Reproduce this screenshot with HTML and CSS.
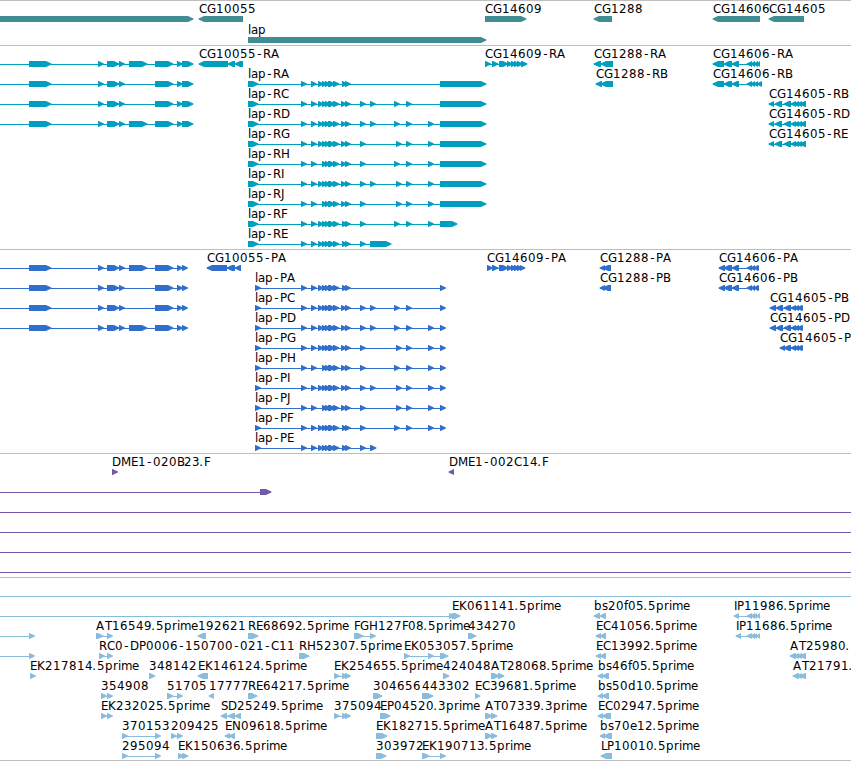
FILE: index.html
```html
<!DOCTYPE html>
<html lang="en">
    <head>
        <meta charset="UTF-8">
        <title>Genome browser</title>
        <meta name="viewport" content="width=device-width, initial-scale=1.0">
        <link rel="stylesheet" href="styles.css">
    </head>
    <body>
        <main class="browser">
            <svg class="track genes" id="genes" height="44"></svg>
            <svg class="track transcripts" id="transcripts" height="203"></svg>
            <svg class="track proteins" id="proteins" height="203"></svg>
            <svg class="track ends" id="ends" height="123"></svg>
            <svg class="track ests" id="ests" height="182"></svg>
        </main>
        <script src="tracks.js"></script>
    </body>
</html>
```

FILE: styles.css
```css
body {
    margin: 0;
    background-color: white;
    overflow: hidden;
}

.browser {
    display: flex;
    flex-direction: column;
    border-bottom: 1px solid #bebebe;
}

.track {
    display: block;
    width: 100%;
    border-top: 1px solid #bebebe;
    overflow: hidden;
    font-family: "DejaVu Sans", sans-serif;
    font-size: 11.8px;
}

.track text { fill: black; }

.genes { color: #408e93; }
.transcripts { color: #009fc0; }
.proteins { color: #316fcc; }
.ends { color: #7358a8; }
.ests { color: #8abddd; }

.block { fill: currentColor; }

.intron {
    fill: currentColor;
    shape-rendering: crispEdges;
}
```

FILE: tracks.js
```js
const SVG = 'http://www.w3.org/2000/svg'
const HEAD = 5

// Whole-pixel character advances for the labels, 8 for the others
const advances = {
    G: 9, A: 9, D: 9, H: 9, N: 9, M: 10, T: 7, B: 7, E: 7, P: 7, S: 7,
    F: 6, L: 6, I: 3, J: 4, '-': 7, '.': 4,
    l: 3, a: 7, r: 5, i: 3, m: 11, e: 7, s: 6, f: 4
}

const shifts = { '-': 1.2, '.': -0.8 }

// Exons shared by the lap isoforms
const lap = '301 311 318 322 325 328-335 333-339 '
const lapShort = '301 311 322 325 328-335 333-339 '
const left = '29-51 98 107-119 119 '
const cg14609 = '492-498 499-508 507 511 514 517 '
const cg14605 = '784-791 791-796 794-799 797-802 '
const cg14606 = '724-732 732-739 747-752 751-755 754-758 '

// Each feature: row, label, strand, blocks ("start-end", or "start" alone)
// A block list starting with "<" goes on past the left edge.
const tracks = {
    genes: [
        [0, '', '+', '< 0-193'],
        [0, 'CG10055', '-', '199-243'],
        [0, 'CG14609', '+', '485-526'],
        [0, 'CG1288', '-', '594-612'],
        [0, 'CG14606', '-', '713-760'],
        [0, 'CG14605', '-', '769-804'],
        [1, 'lap', '+', '248-486']
    ],
    transcripts: [
        [0, '', '+', '< ' + left + '129-147 155-173 177 182-193'],
        [1, '', '+', '< ' + left + '155-173 177 182-193'],
        [2, '', '+', '< ' + left + '155-173 177 182-193'],
        [3, '', '+', '< ' + left + '129-147 155-173 177 182-193'],
        [0, 'CG10055-RA', '-', '199-228 228-235 235-243'],
        [1, 'lap-RA', '+', '248-258 ' + lap + '342 345 440-486'],
        [2, 'lap-RC', '+', '248-258 ' + lap + '341 345 360 370 394 406 440-486'],
        [3, 'lap-RD', '+', '248-258 ' + lap + '341 345 360 370 394 406 428 440-486'],
        [4, 'lap-RG', '+', '248-258 ' + lap + '341 345 360 396 406 428 440-486'],
        [5, 'lap-RH', '+', '248-258 ' + lapShort + '341 345 360 394 406 428 440-486'],
        [6, 'lap-RI', '+', '248-258 ' + lap + '341 345 360 370 396 406 428 440-486'],
        [7, 'lap-RJ', '+', '248-258 ' + lapShort + '341 345 360 396 406 428 440-486'],
        [8, 'lap-RF', '+', '248-258 ' + lap + '342 345 360 394 406 428 440-457'],
        [9, 'lap-RE', '+', '248-258 ' + lap + '342 345 360 370-391'],
        [0, 'CG14609-RA', '+', '485 ' + cg14609 + '521-527'],
        [0, 'CG1288-RA', '-', '594-601 601-613'],
        [1, 'CG1288-RB', '-', '596-602 601-613'],
        [0, 'CG14606-RA', '-', '713-724 ' + cg14606 + '757-760'],
        [1, 'CG14606-RB', '-', '713-724 ' + cg14606 + '757-762'],
        [2, 'CG14605-RB', '-', '769-774 775-782 ' + cg14605 + '800-806'],
        [3, 'CG14605-RD', '-', '769-774 775-782 ' + cg14605 + '800-806'],
        [4, 'CG14605-RE', '-', '769-774 775-782 ' + cg14605 + '800-806']
    ],
    proteins: [
        [0, '', '+', '< ' + left + '129-147 155-173 177 182'],
        [1, '', '+', '< ' + left + '155-173 177 182'],
        [2, '', '+', '< ' + left + '155-173 177 182'],
        [3, '', '+', '< ' + left + '129-147 155-173 177 182'],
        [0, 'CG10055-PA', '-', '207-227 227-235 235-241'],
        [1, 'lap-PA', '+', '255 ' + lap + '342 345 440'],
        [2, 'lap-PC', '+', '255 ' + lap + '341 345 360 370 394 406 440'],
        [3, 'lap-PD', '+', '255 ' + lap + '341 345 360 370 394 406 428 440'],
        [4, 'lap-PG', '+', '255 ' + lap + '341 345 360 396 406 428 440'],
        [5, 'lap-PH', '+', '255 ' + lapShort + '341 345 360 394 406 428 440'],
        [6, 'lap-PI', '+', '255 ' + lap + '341 345 360 370 396 406 428 440'],
        [7, 'lap-PJ', '+', '255 ' + lapShort + '341 345 360 396 406 428 440'],
        [8, 'lap-PF', '+', '255 ' + lap + '342 345 360 394 406 428 440'],
        [9, 'lap-PE', '+', '255 ' + lap + '342 345 360 370-376'],
        [0, 'CG14609-PA', '+', '487 ' + cg14609 + '520-525'],
        [0, 'CG1288-PA', '-', '600-605 603-611'],
        [1, 'CG1288-PB', '-', '600-605 603-611'],
        [0, 'CG14606-PA', '-', '719-725 ' + cg14606 + '756-759'],
        [1, 'CG14606-PB', '-', '719-725 ' + cg14606 + '756-759'],
        [2, 'CG14605-PB', '-', '770-776 776-783 ' + cg14605 + '800-803'],
        [3, 'CG14605-PD', '-', '770-776 776-783 ' + cg14605 + '800-803'],
        [4, 'CG14605-P', '-', '780-785 ' + cg14605 + '800-803']
    ],
    ends: [
        [0, 'DME1-020B23.F', '+', '112'],
        [0, 'DME1-002C14.F', '-', '449-454'],
        [1, '', '+', '< 260-271'],
        [2, '', '+', '< 900'],
        [3, '', '+', '< 900'],
        [4, '', '+', '< 900'],
        [5, '', '+', '< 900']
    ],
    ests: [
        [0, '', '+', '< 900'],
        [1, '', '+', '< 449'],
        [1, 'EK061141.5prime', '+', '452-460'],
        [1, 'bs20f05.5prime', '-', '594-600 600-606'],
        [1, 'IP11986.5prime', '-', '734-739 747-752 751-755 754-757 757-760'],
        [2, '', '+', '< 29'],
        [2, 'AT16549.5prime', '+', '96-103 107'],
        [2, '192621', '-', '198-206'],
        [2, 'RE68692.5prime', '+', '248-258'],
        [2, 'FGH127F08.5prime', '+', '354-363 370'],
        [2, '434270', '+', '468-476'],
        [2, 'EC41056.5prime', '-', '596-601 600-606'],
        [2, 'IP11686.5prime', '-', '736-741 747-752 751-755 754-757 757-760'],
        [3, '', '+', '< 29'],
        [3, 'RC0-DP0006-150700-021-C11', '+', '99 107'],
        [3, 'RH52307.5prime', '+', '299-309'],
        [3, 'EK053057.5prime', '+', '404 428 440-448'],
        [3, 'EC13992.5prime', '-', '596-601 600-606'],
        [3, 'AT25980.', '-', '790-796 794-799 797-802 800-806'],
        [4, 'EK217814.5prime', '+', '30'],
        [4, '348142', '+', '149-155'],
        [4, 'EK146124.5prime', '-', '198-208'],
        [4, 'EK254655.5prime', '+', '334 342 345'],
        [4, '424048', '+', '443-449'],
        [4, 'AT28068.5prime', '+', '491-499 498-504'],
        [4, 'bs46f05.5prime', '-', '598-603 602-609'],
        [4, 'AT21791.', '-', '793-799 797-802 800-806'],
        [5, '354908', '+', '101 107'],
        [5, '51705', '+', '167-173 177'],
        [5, '17777', '-', '209-214'],
        [5, 'RE64217.5prime', '+', '248-257'],
        [5, '304656', '+', '373-382'],
        [5, '443302', '+', '422-433'],
        [5, 'EC39681.5prime', '+', '475-480'],
        [5, 'bs50d10.5prime', '-', '598-603 602-609'],
        [6, 'EK232025.5prime', '+', '101 107'],
        [6, 'SD25249.5prime', '-', '221-227 228-235 235-241'],
        [6, '375094', '+', '334 342 345'],
        [6, 'EP04520.3prime', '+', '380-390'],
        [6, 'AT07339.3prime', '+', '485-492 491-497'],
        [6, 'EC02947.5prime', '-', '598-603 602-611'],
        [7, '370153', '+', '122 155'],
        [7, '209425', '+', '171 177'],
        [7, 'EN09618.5prime', '-', '225-230 229-235'],
        [7, 'EK182715.5prime', '+', '376-387'],
        [7, 'AT16487.5prime', '+', '485-492 491-497'],
        [7, 'bs70e12.5prime', '-', '600-605 604-612'],
        [8, '295094', '+', '122 155'],
        [8, 'EK150636.5prime', '+', '178 182-188'],
        [8, '303972', '+', '376-386'],
        [8, 'EK190713.5prime', '+', '422-429 440'],
        [8, 'LP10010.5prime', '-', '601-612']
    ]
}

function add(parent, name, attributes) {
    const elt = document.createElementNS(SVG, name)
    for (const key in attributes) elt.setAttribute(key, attributes[key])
    parent.appendChild(elt)
    return elt
}

function arrow(start, end, top, strand) {
    const head = Math.min(HEAD, end - start)
    const [tail, neck, tip] = strand === '+'
        ? [start, end - head, end + 0.4]
        : [end, start + head, start - 0.4]
    return `${tail},${top} ${neck},${top} ${tip},${top + 2.6} ` +
        `${tip},${top + 3.4} ${neck},${top + 6} ${tail},${top + 6}`
}

function positions(label, start) {
    let x = start
    return [...label].map(char => {
        const current = x
        x += advances[char] || 8
        return current + (shifts[char] || 0)
    }).join(' ')
}

for (const id in tracks) {
    const svg = document.getElementById(id)
    const pitch = id === 'genes' ? 21 : 20

    for (const [row, label, strand, spec] of tracks[id]) {
        const top = 15 + row * pitch
        const open = spec.startsWith('<')
        const blocks = spec.replace('< ', '').trim().split(' ').map(block => {
            const [start, end] = block.split('-').map(Number)
            return [start, end || start + 5.5]
        })
        const first = open ? 0 : blocks[0][0]
        const last = blocks[blocks.length - 1][0]

        if (last > first) {
            add(svg, 'rect', {
                class: 'intron', x: first, y: top + 3, width: last - first, height: 1
            })
        }
        for (const [start, end] of blocks) {
            add(svg, 'polygon', {
                class: 'block', points: arrow(start, end, top, strand)
            })
        }
        if (label) {
            add(svg, 'text', {
                x: positions(label, first), y: top - 3
            }).textContent = label
        }
    }
}
```
